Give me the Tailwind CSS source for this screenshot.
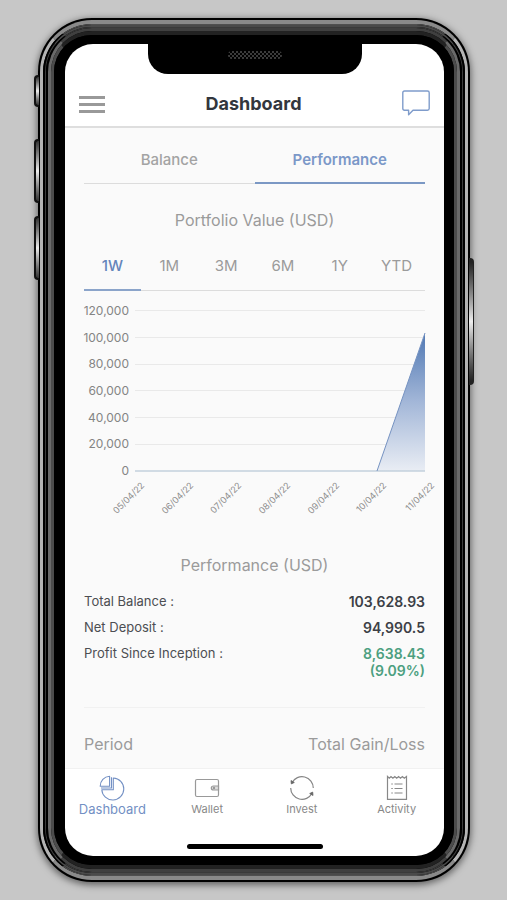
<!DOCTYPE html>
<html lang="en">
<head>
<meta charset="utf-8">
<meta name="viewport" content="width=device-width, initial-scale=1">
<title>Dashboard</title>
<script src="https://cdn.jsdelivr.net/npm/@tailwindcss/browser@4"></script>
</head>
<body class="min-h-screen bg-[#c7c7c7] font-['Inter','Roboto',sans-serif] text-[#9b9b9b]">
<div class="pl-[38px] pr-[37px] pt-[18px] pb-[17px]">
 <div class="relative rounded-[54px] border-2 border-black bg-black shadow-[0_2px_7px_1px_rgba(0,0,0,0.5)]">
  <!-- side buttons -->
  <div class="absolute -left-[6px] top-[55px] h-[32px] w-[5px] rounded-l-sm border-2 border-r-0 border-[#111] bg-linear-to-b from-[#333] via-[#eee] to-[#333]"></div>
  <div class="absolute -left-[6px] top-[119px] h-[64px] w-[5px] rounded-l-sm border-2 border-r-0 border-[#111] bg-linear-to-b from-[#333] via-[#eee] to-[#333]"></div>
  <div class="absolute -left-[6px] top-[196px] h-[64px] w-[5px] rounded-l-sm border-2 border-r-0 border-[#111] bg-linear-to-b from-[#333] via-[#eee] to-[#333]"></div>
  <div class="absolute -right-[6px] top-[238px] h-[127px] w-[5px] rounded-r-sm border-r-1 border-y-4 border-[#222] bg-linear-to-b from-[#222] via-[#eee] to-[#222]"></div>
  <!-- bezel rings -->
  <div class="rounded-[52px] border-x-3 border-y-4 border-x-[#b4b4b4] border-y-[#8a8a8a]">
  <div class="rounded-[49px_/_48px] border-x-2 border-y-1 border-x-black border-y-[#505050]">
  <div class="rounded-[47px] border-x-1 border-y-2 border-x-[#3c3c3c] border-y-[#4a4a4a]">
  <div class="rounded-[46px_/_45px] border-x-2 border-y-1 border-x-black border-y-[#3a3a3a]">
  <div class="rounded-[44px] border-x-3 border-y-3 border-x-[#6a6a6a] border-y-[#404040]">
  <div class="rounded-[41px] border-x-3 border-y-4 border-x-[#4c4c4c] border-y-[#222]">
  <div class="rounded-[38px_/_37px] border-l-11 border-r-10 border-y-9 border-black">
   <div class="relative overflow-hidden rounded-[28px] bg-white">
    <div class="absolute left-1/2 top-0 flex h-[30px] w-[214px] -translate-x-1/2 justify-center rounded-b-[20px] bg-black pt-[6px]">
      <svg class="h-[10px] w-[56px]" viewBox="0 0 56 10" aria-hidden="true">
        <defs><pattern id="mesh" width="4" height="4" patternUnits="userSpaceOnUse"><path d="M0 0L4 4M4 0L0 4" stroke="#4a4a4a" stroke-width=".8"/></pattern></defs>
        <rect x="1" y="1" width="54" height="8" rx="4" fill="url(#mesh)"/>
      </svg>
    </div>
    <header class="flex h-[84px] items-end justify-between border-b-2 border-[#dedede] px-[14px] pb-[10px]">
      <button type="button" aria-label="Menu" class="flex h-[24px] w-[26px] flex-col justify-center gap-[4px]">
        <span class="h-[3px] bg-[#999]"></span><span class="h-[3px] bg-[#999]"></span><span class="h-[3px] bg-[#999]"></span>
      </button>
      <h1 class="pb-[1px] text-[18px] leading-[22px] font-bold text-[#32363d]">Dashboard</h1>
      <button type="button" aria-label="Messages" class="h-[26px] w-[28px]">
        <svg class="h-[26px] w-[28px]" viewBox="0 0 28 26" fill="none" stroke="#7f9ccb" stroke-width="1.4" stroke-linejoin="round"><path d="M2.5 1H25.500Q27.200 1 27.200 2.700V18.500Q27.200 20.200 25.500 20.200H11L6.600 24.800V20.200H2.500Q.8 20.200 .8 18.500V2.700Q.8 1 2.500 1Z"/></svg>
      </button>
    </header>
    <main class="bg-[#fafafa] px-[19px]">
      <nav class="grid grid-cols-2 border-b border-[#dcdcdc] text-center text-[15px] leading-[20px] font-medium">
        <button type="button" class="-mb-px h-[56px] pt-[7px] text-[#a3a3a3]">Balance</button>
        <button type="button" class="-mb-px h-[56px] border-b-2 border-[#7b98c4] pt-[9px] font-semibold text-[#7b98c8]">Performance</button>
      </nav>
      <h2 class="pt-[26px] text-center text-[16px] leading-[20px]">Portfolio Value (USD)</h2>
      <div class="mt-[12px] grid grid-cols-6 border-b border-[#dcdcdc] text-center text-[15px] leading-[20px]">
        <button type="button" class="-mb-px h-[49px] border-b-2 border-[#8ba4ca] font-medium text-[#6585bb]">1W</button>
        <button type="button" class="h-[48px]">1M</button>
        <button type="button" class="h-[48px]">3M</button>
        <button type="button" class="h-[48px]">6M</button>
        <button type="button" class="h-[48px]">1Y</button>
        <button type="button" class="h-[48px]">YTD</button>
      </div>
      <svg class="block w-full overflow-visible" viewBox="0 0 341 230" role="img" aria-label="Portfolio value by day">
        <defs><linearGradient id="area" x1="0" y1="0" x2="0" y2="1"><stop offset="0" stop-color="#5078b3"/><stop offset=".5" stop-color="#a3b7d8"/><stop offset="1" stop-color="#e9edf4"/></linearGradient></defs>
        <g stroke="#e9e9e9"><path d="M51 19.500H341M51 46.500H341M51 73.500H341M51 99.500H341M51 126.500H341M51 153.500H341"/></g>
        <path d="M293 180L341 42V180Z" fill="url(#area)"/>
        <path d="M51 180H341" stroke="#c3d0dc" stroke-width="1.500"/>
        <path d="M293 180L341 42" stroke="#7693c2" fill="none"/>
        <g font-size="12" fill="#848484" text-anchor="end">
          <text x="45" y="24">120,000</text><text x="45" y="51">100,000</text><text x="45" y="77">80,000</text><text x="45" y="104">60,000</text><text x="45" y="131">40,000</text><text x="45" y="157">20,000</text><text x="45" y="184">0</text>
        </g>
        <g font-size="9" fill="#8d8d8d" text-anchor="end">
          <text transform="translate(61 195) rotate(-45)">05/04/22</text>
          <text transform="translate(110 195) rotate(-45)">06/04/22</text>
          <text transform="translate(158 195) rotate(-45)">07/04/22</text>
          <text transform="translate(207 195) rotate(-45)">08/04/22</text>
          <text transform="translate(256 195) rotate(-45)">09/04/22</text>
          <text transform="translate(303 195) rotate(-45)">10/04/22</text>
          <text transform="translate(351 195) rotate(-45)">11/04/22</text>
        </g>
      </svg>
      <h2 class="pt-[34px] text-center text-[16px] leading-[20px]">Performance (USD)</h2>
      <dl class="mt-[18px] flex flex-col gap-[9px] border-b border-[#f1f1f1] pb-[28px] text-[13px] leading-[17px] text-[#4c4e52]">
        <div class="flex justify-between"><dt>Total Balance :</dt><dd class="text-[14px] leading-[17px] font-semibold text-[#3c3f46]">103,628.93</dd></div>
        <div class="flex justify-between"><dt>Net Deposit :</dt><dd class="text-[14px] leading-[17px] font-semibold text-[#3c3f46]">94,990.5</dd></div>
        <div class="flex justify-between"><dt>Profit Since Inception :</dt><dd class="text-right text-[14px] leading-[17px] font-semibold text-[#4c9f80]">8,638.43<br>(9.09%)</dd></div>
      </dl>
      <div class="flex justify-between pt-[26px] pb-[14px] text-[16px] leading-[20px]"><span>Period</span><span>Total Gain/Loss</span></div>
    </main>
    <footer class="border-t border-[#f1f1f1] pb-[7px]">
      <nav class="grid h-[75px] grid-cols-4 pt-[6px] text-[11px] leading-[16px] text-[#888]">
        <a href="#dashboard" class="flex flex-col items-center text-[13px] text-[#7390c4]">
          <svg class="h-[26px] w-[26px]" viewBox="0 0 26 26" fill="none" stroke="currentColor" stroke-width="1.100" stroke-linejoin="round"><path d="M14.300 3A11 11 0 1 1 2.800 14.700H14.300Z"/><path d="M10.600 1.200V11.300H1.200A9.800 9.800 0 0 1 10.600 1.200Z"/><path d="M12.500 2.200V13H2"/></svg>Dashboard</a>
        <a href="#wallet" class="flex flex-col items-center">
          <svg class="h-[26px] w-[26px]" viewBox="0 0 26 26" fill="none" stroke="#999" stroke-width="1.200"><rect x="1.500" y="4.500" width="23" height="17" rx="1.500"/><path d="M24.500 11H19.500Q17.300 11 17.300 13T19.500 15H24.500Z" fill="#ddd"/><circle cx="20" cy="13" r=".6"/></svg>Wallet</a>
        <a href="#invest" class="flex flex-col items-center">
          <svg class="h-[26px] w-[26px]" viewBox="0 0 26 26" fill="none" stroke="#858585" stroke-width="1.200"><path d="M3 7.700A11.300 11.300 0 0 1 24.300 13"/><path d="M23 18.300A11.300 11.300 0 0 1 1.700 13"/><path d="M2 5.500L2.300 8.900L5.300 7.500ZM24 20.500L23.700 17.100L20.700 18.500Z" fill="#666" stroke="#666" stroke-width=".8"/></svg>Invest</a>
        <a href="#activity" class="flex flex-col items-center">
          <svg class="h-[26px] w-[26px]" viewBox="0 0 26 26" fill="none" stroke="#888" stroke-width="1.200"><path d="M3.500 1.500L5.300 3.200L7 1.500L8.900 3.200L10.800 1.500L12.700 3.200L14.600 1.500L16.500 3.200L18.400 1.500L20.300 3.200L22.500 1.500V24.300H3.500Z"/><path d="M10.500 9H18.500M10.500 13.500H18.500M10.500 18H18.500M7.300 9H8.800M7.300 13.500H8.800M7.300 18H8.800"/></svg>Activity</a>
      </nav>
      <div class="mx-auto h-[5px] w-[136px] rounded-full bg-black"></div>
    </footer>
   </div>
  </div></div></div></div></div></div></div>
 </div>
</div>
</body>
</html>
